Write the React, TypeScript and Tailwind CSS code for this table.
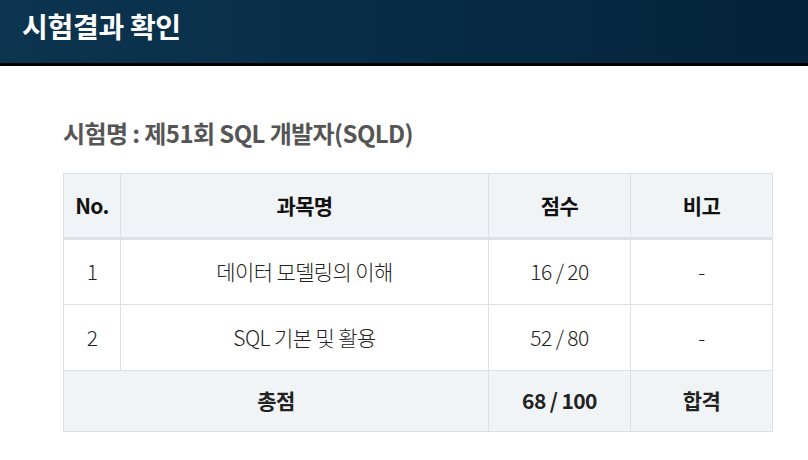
const font = { fontFamily: '"Noto Sans CJK KR", "Noto Sans", sans-serif' };

type Row = { no: string; subject: string; score: string; note: string };

const rows: Row[] = [
  { no: "1", subject: "데이터 모델링의 이해", score: "16 / 20", note: "-" },
  { no: "2", subject: "SQL 기본 및 활용", score: "52 / 80", note: "-" },
];

export default function App() {
  return (
    <div className="h-[460px] w-[808px] bg-white" style={font}>
      <header className="flex h-[66px] items-start border-b-[3px] border-black bg-gradient-to-r from-[#0c3550] to-[#05233a] px-[22px] pt-[5px]">
        <h1 className="text-[28px] leading-[42px] font-bold tracking-[-0.3px] text-white">시험결과 확인</h1>
      </header>

      <main className="px-[63px] pt-[49px]">
        <h2 className="text-[24px] leading-[36px] font-bold tracking-[-0.6px] text-[#555]">시험명 : 제51회 SQL 개발자(SQLD)</h2>

        <table className="mt-[22px] w-[709px] table-fixed border-collapse text-center text-[21px] tracking-[-0.6px]">
          <colgroup>
            <col className="w-[57px]" />
            <col className="w-[368px]" />
            <col className="w-[142px]" />
            <col className="w-[142px]" />
          </colgroup>
          <thead>
            <tr className="h-[65px] border-b-[3px] border-[#dde1e6] bg-[#f1f4f6] font-bold text-[#111]">
              <th className="border border-[#dde1e6]">No.</th>
              <th className="border border-[#dde1e6]">과목명</th>
              <th className="border border-[#dde1e6]">점수</th>
              <th className="border border-[#dde1e6]">비고</th>
            </tr>
          </thead>
          <tbody className="font-light text-[#222]">
            {rows.map((r) => (
              <tr key={r.no} className="h-[66px]">
                <td className="border border-[#dde1e6]">{r.no}</td>
                <td className="border border-[#dde1e6]">{r.subject}</td>
                <td className="border border-[#dde1e6]">{r.score}</td>
                <td className="border border-[#dde1e6]">{r.note}</td>
              </tr>
            ))}
            <tr className="h-[61px] bg-[#f1f4f6] font-bold text-[#222]">
              <td colSpan={2} className="border border-[#dde1e6]">총점</td>
              <td className="border border-[#dde1e6]">68 / 100</td>
              <td className="border border-[#dde1e6]">합격</td>
            </tr>
          </tbody>
        </table>
      </main>
    </div>
  );
}
